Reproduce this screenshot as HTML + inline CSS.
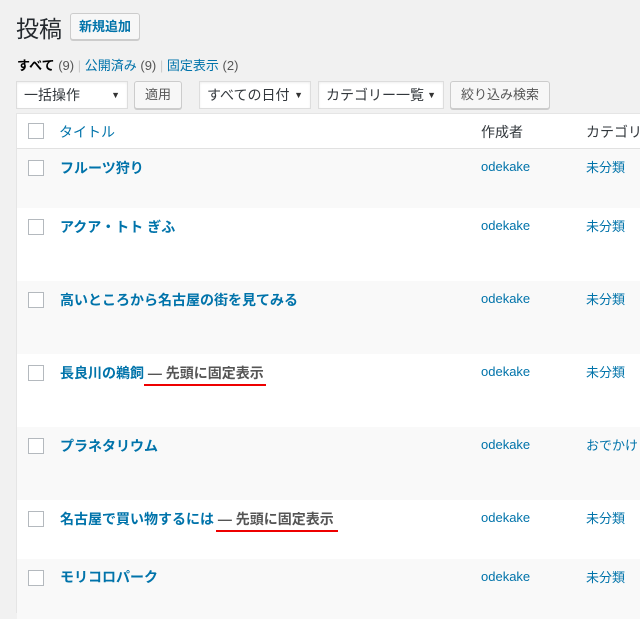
<!DOCTYPE html>
<html><head><meta charset="utf-8"><style>
*{margin:0;padding:0;box-sizing:border-box}
body{width:640px;height:594px;overflow:hidden;background:#f1f1f1;font-family:"Liberation Sans","Noto Sans CJK JP",sans-serif;font-size:13px;color:#444;position:relative}
.a{position:absolute;white-space:nowrap}
.btn{position:absolute;border:1px solid #ccc;background:#f7f7f7;border-radius:3px;box-shadow:0 1px 0 #ccc;color:#555;font-size:13px;text-align:center}
.sel{position:absolute;background:#fff;border:1px solid #ddd;box-shadow:inset 0 1px 2px rgba(0,0,0,.07);color:#32373c;font-size:14px;padding-left:7px;line-height:26px}
.sel:after{content:"▼";position:absolute;right:7px;top:0;font-size:9px;color:#333}
.tbl{position:absolute;left:16px;top:113px;width:640px;height:500px;background:#fff;border:1px solid #e5e5e5}
.row{position:absolute;left:0;width:640px}
.cb{position:absolute;left:11px;width:16px;height:16px;border:1px solid #b4b9be;background:#fff}
.t{position:absolute;left:43px;font-weight:bold;font-size:14px;color:#0073aa;white-space:nowrap}
.t span{color:#555}
.au{position:absolute;left:464px;color:#0073aa;font-size:13px}
.ca{position:absolute;left:569px;color:#0073aa;font-size:13px;white-space:nowrap}
.ul{position:absolute;height:2px;background:#e00}
</style></head><body>
<div class="a" style="left:16px;top:10px;font-size:23px;color:#23282d">投稿</div>
<div class="btn" style="left:70px;top:13px;width:70px;height:27px;line-height:25px;color:#0073aa;font-weight:bold;background:#f7f7f7">新規追加</div>
<div class="a" style="left:17px;top:55px;font-size:13px"><b style="color:#000">すべて</b> <span style="color:#555">(9)</span> <span style="color:#ccc">|</span> <span style="color:#0073aa">公開済み</span> <span style="color:#555">(9)</span> <span style="color:#ccc">|</span> <span style="color:#0073aa">固定表示</span> <span style="color:#555">(2)</span></div>
<div class="sel" style="left:16px;top:81px;width:112px;height:28px">一括操作</div>
<div class="btn" style="left:134px;top:81px;width:48px;height:28px;line-height:26px">適用</div>
<div class="sel" style="left:199px;top:81px;width:112px;height:28px">すべての日付</div>
<div class="sel" style="left:318px;top:81px;width:126px;height:28px">カテゴリー一覧</div>
<div class="btn" style="left:450px;top:81px;width:100px;height:28px;line-height:26px">絞り込み検索</div>
<div class="tbl">
<div class="row" style="top:0;height:35px;border-bottom:1px solid #e1e1e1">
<div class="cb" style="top:9px"></div>
<div class="a" style="left:42px;top:8px;font-size:14px;color:#0073aa">タイトル</div>
<div class="a" style="left:464px;top:8px;font-size:14px;color:#32373c">作成者</div>
<div class="a" style="left:569px;top:8px;font-size:14px;color:#32373c">カテゴリー</div>
</div>
<div class="row" style="top:35px;height:59px;background:#f9f9f9"><div class="cb" style="top:11px"></div><div class="t" style="top:9px">フルーツ狩り</div><div class="au" style="top:10px">odekake</div><div class="ca" style="top:8px">未分類</div></div>
<div class="row" style="top:94px;height:73px;background:#fff"><div class="cb" style="top:11px"></div><div class="t" style="top:9px">アクア・トト ぎふ</div><div class="au" style="top:10px">odekake</div><div class="ca" style="top:8px">未分類</div></div>
<div class="row" style="top:167px;height:73px;background:#f9f9f9"><div class="cb" style="top:11px"></div><div class="t" style="top:9px">高いところから名古屋の街を見てみる</div><div class="au" style="top:10px">odekake</div><div class="ca" style="top:8px">未分類</div></div>
<div class="row" style="top:240px;height:73px;background:#fff"><div class="cb" style="top:11px"></div><div class="t" style="top:9px">長良川の鵜飼 <span>— 先頭に固定表示</span></div><div class="ul" style="left:127px;top:30px;width:122px"></div><div class="au" style="top:10px">odekake</div><div class="ca" style="top:8px">未分類</div></div>
<div class="row" style="top:313px;height:73px;background:#f9f9f9"><div class="cb" style="top:11px"></div><div class="t" style="top:9px">プラネタリウム</div><div class="au" style="top:10px">odekake</div><div class="ca" style="top:8px">おでかけ</div></div>
<div class="row" style="top:386px;height:59px;background:#fff"><div class="cb" style="top:11px"></div><div class="t" style="top:9px">名古屋で買い物するには <span>— 先頭に固定表示</span></div><div class="ul" style="left:199px;top:30px;width:122px"></div><div class="au" style="top:10px">odekake</div><div class="ca" style="top:8px">未分類</div></div>
<div class="row" style="top:445px;height:60px;background:#f9f9f9"><div class="cb" style="top:11px"></div><div class="t" style="top:8px">モリコロパーク</div><div class="au" style="top:10px">odekake</div><div class="ca" style="top:8px">未分類</div></div>
</div>
</body></html>
